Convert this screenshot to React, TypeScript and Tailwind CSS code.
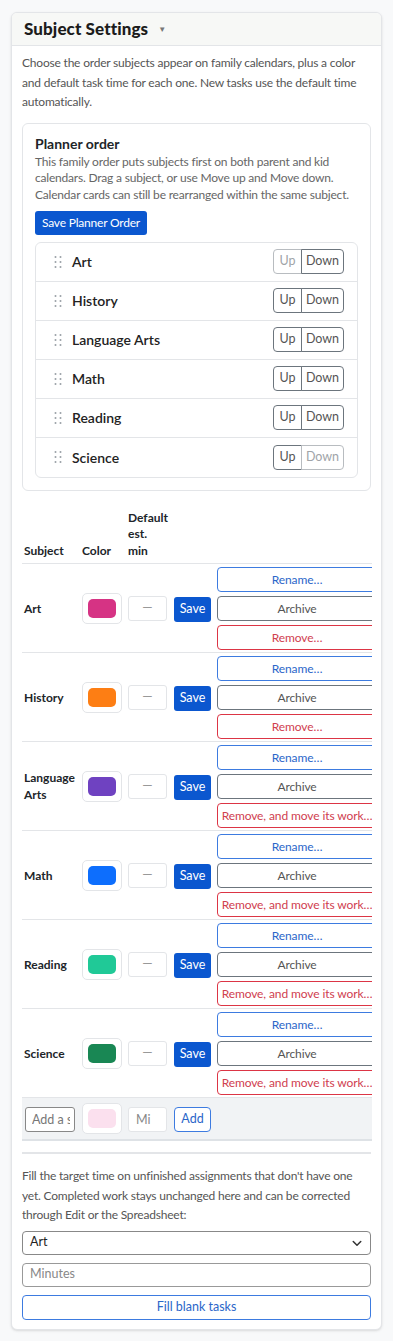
import React from "react";

type Subject = { name: string; color: string; longRemove?: boolean };

const subjects: Subject[] = [
  { name: "Art", color: "#d63384" },
  { name: "History", color: "#fd7e14" },
  { name: "Language Arts", color: "#6f42c1", longRemove: true },
  { name: "Math", color: "#0d6efd", longRemove: true },
  { name: "Reading", color: "#20c997", longRemove: true },
  { name: "Science", color: "#198754", longRemove: true },
];

const Grip = () => (
  <svg width="10" height="14" viewBox="0 0 10 14" className="shrink-0">
    {[2, 7, 12].map((y) =>
      [2.5, 7.5].map((x) => <circle key={`${x}-${y}`} cx={x} cy={y} r="1" fill="#9aa0a6" />)
    )}
  </svg>
);

const Swatch = ({ color }: { color: string }) => (
  <div className="flex h-[31px] w-[40px] items-center justify-center rounded-[5px] border border-[#e3e5e8] bg-white">
    <div className="h-[19px] w-[28px] rounded-[5px]" style={{ backgroundColor: color }} />
  </div>
);

export default function App() {
  return (
    <div className="min-h-screen bg-[#f8f9fa] px-[11px] pb-3 pt-[12px] font-['Lato',sans-serif] text-[#212529]">
      <div className="overflow-hidden rounded-md border border-[#e3e5e8] bg-white shadow-sm">
        <div className="flex h-[33px] items-center gap-[10px] border-b border-[#e3e5e8] bg-[#f7f8f6] px-3">
          <h2 className="text-[17px] font-black tracking-[0.1px] text-[#1c1c1c]">Subject Settings</h2>
          <span className="text-[8px] text-[#777]">▼</span>
        </div>

        <div className="px-[10px] pb-[9px] pt-[7px]">
          <p className="text-[12px] leading-[19.5px] tracking-[-0.2px] text-[#555]">
            Choose the order subjects appear on family calendars, plus a color and default task time for each one. New
            tasks use the default time automatically.
          </p>

          {/* planner order */}
          <section className="mt-[11px] rounded-md border border-[#e3e5e8] px-[12px] pb-[12px] pt-[10px]">
            <h3 className="text-[14px] font-bold leading-[20px]">Planner order</h3>
            <p className="text-[12px] leading-[16.7px] tracking-[-0.2px] text-[#666]">
              This family order puts subjects first on both parent and kid calendars. Drag a subject, or use Move up and
              Move down. Calendar cards can still be rearranged within the same subject.
            </p>
            <button className="mt-[7px] h-[24px] rounded-[3px] bg-[#0b57cf] px-[7px] text-[12px] tracking-[-0.2px] text-white">
              Save Planner Order
            </button>
            <ul className="mt-[7px] rounded-md border border-[#e3e5e8]">
              {subjects.map((s, i) => (
                <li
                  key={s.name}
                  className="flex h-[39px] items-center border-b border-[#e3e5e8] pl-[17px] pr-[13px] last:border-b-0"
                >
                  <Grip />
                  <span className="ml-[9px] flex-1 text-[14px] font-semibold text-[#222]">{s.name}</span>
                  <div className="flex h-[25px] text-[12.5px]">
                    <button
                      className={`w-[29px] rounded-l-[4px] border ${
                        i === 0 ? "border-[#b8bcc0] text-[#a0a4a8]" : "border-[#6c757d] text-[#555]"
                      }`}
                    >
                      Up
                    </button>
                    <button
                      className={`-ml-px w-[43px] rounded-r-[4px] border ${
                        i === subjects.length - 1 ? "border-[#b8bcc0] text-[#a0a4a8]" : "border-[#6c757d] text-[#555]"
                      }`}
                    >
                      Down
                    </button>
                  </div>
                </li>
              ))}
            </ul>
          </section>

          {/* subject table */}
          <div className="mt-[19px] w-[350px] overflow-hidden">
            <table className="w-[358px] table-fixed border-collapse">
              <colgroup>
                <col className="w-[57px]" />
                <col className="w-[46px]" />
                <col className="w-[46px]" />
                <col className="w-[43px]" />
                <col className="w-[166px]" />
              </colgroup>
              <thead>
                <tr className="border-b border-[#e3e5e8] text-left align-bottom text-[12px] font-bold leading-[16.5px]">
                  <th className="px-[3px] pb-[4px] pl-[2px]">Subject</th>
                  <th className="px-[3px] pb-[4px]">Color</th>
                  <th className="px-[3px] pb-[4px]">Default est. min</th>
                  <th />
                  <th />
                </tr>
              </thead>
              <tbody className="border-b-2 border-[#dee2e6]">
                {subjects.map((s) => (
                  <tr key={s.name} className="border-b border-[#e3e5e8] last:border-b-0">
                    <td className="px-[3px] pl-[2px] text-[12px] font-bold leading-[17px]">{s.name}</td>
                    <td className="px-[3px]">
                      <Swatch color={s.color} />
                    </td>
                    <td className="px-[3px]">
                      <div className="flex h-[25px] w-[39px] items-center justify-center rounded-[3px] border border-[#e3e5e8] text-[13px] text-[#999]">
                        —
                      </div>
                    </td>
                    <td className="px-[3px]">
                      <button className="h-[25px] w-[37px] rounded-[3px] bg-[#0b57cf] text-[12.5px] text-white">Save</button>
                    </td>
                    <td className="px-[3px] pb-[2px] pt-[3px]">
                      <div className="flex w-[160px] flex-col gap-[4px] whitespace-nowrap text-[12px] tracking-[-0.1px]">
                        <button className="h-[25px] rounded-[4px] border border-[#3d7be0] text-[#2b66c9]">Rename…</button>
                        <button className="h-[25px] rounded-[4px] border border-[#6c757d] text-[#555]">Archive</button>
                        <button className="h-[25px] rounded-[4px] border border-[#dc3545] text-[#d0404f]">
                          {s.longRemove ? "Remove, and move its work…" : "Remove…"}
                        </button>
                      </div>
                    </td>
                  </tr>
                ))}
                <tr className="border-t border-[#e3e5e8] bg-[#f1f3f5]">
                  <td className="px-[3px] py-[5px]">
                    <input
                      readOnly
                      placeholder="Add a subject"
                      className="h-[25px] w-[50px] rounded-[3px] border border-[#888] bg-white pl-[6px] pr-[4px] text-[12.5px] placeholder:text-[#777]"
                    />
                  </td>
                  <td className="px-[3px] py-[5px]">
                    <Swatch color="#fbe0ee" />
                  </td>
                  <td className="px-[3px] py-[5px]">
                    <input
                      readOnly
                      placeholder="Mi"
                      className="h-[25px] w-[39px] rounded-[3px] border border-[#e3e5e8] bg-white px-[7px] text-[12.5px] placeholder:text-[#888]"
                    />
                  </td>
                  <td className="px-[3px] py-[5px]">
                    <button className="h-[25px] w-[37px] rounded-[4px] border border-[#3d7be0] bg-white text-[12.5px] text-[#2b66c9]">
                      Add
                    </button>
                  </td>
                  <td />
                </tr>
              </tbody>
            </table>
          </div>

          <hr className="mt-[11px] border-t-2 border-[#e3e5e8]" />

          <p className="mt-[12px] text-[12px] leading-[19.5px] tracking-[-0.2px] text-[#555]">
            Fill the target time on unfinished assignments that don't have one yet. Completed work stays unchanged here
            and can be corrected through Edit or the Spreadsheet:
          </p>
          <div className="mt-[6px] flex h-[24px] items-center justify-between rounded-[4px] border border-[#888] px-[7px] text-[12.5px] text-[#222]">
            <span>Art</span>
            <svg width="12" height="12" viewBox="0 0 16 16" fill="none" stroke="#333" strokeWidth="2" strokeLinecap="round" strokeLinejoin="round">
              <path d="M3 6l5 5 5-5" />
            </svg>
          </div>
          <div className="mt-[8px] flex h-[24px] items-center rounded-[4px] border border-[#999] px-[7px] text-[12.5px] text-[#888]">
            Minutes
          </div>
          <button className="mt-[8px] h-[25px] w-full rounded-[4px] border border-[#3d7be0] text-[12.5px] text-[#2b66c9]">
            Fill blank tasks
          </button>
        </div>
      </div>
    </div>
  );
}
